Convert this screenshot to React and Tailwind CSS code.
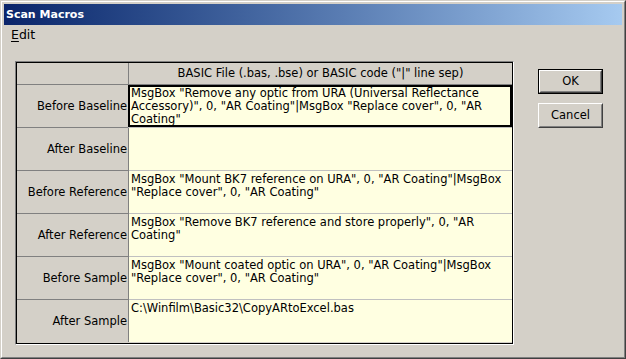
const rows = [
  {
    label: "Before Baseline",
    lines: [
      'MsgBox "Remove any optic from URA (Universal Reflectance',
      'Accessory)", 0, "AR Coating"|MsgBox "Replace cover", 0, "AR',
      'Coating"',
    ],
    selected: true,
  },
  { label: "After Baseline", lines: [] },
  {
    label: "Before Reference",
    lines: [
      'MsgBox "Mount BK7 reference on URA", 0, "AR Coating"|MsgBox',
      '"Replace cover", 0, "AR Coating"',
    ],
  },
  {
    label: "After Reference",
    lines: ['MsgBox "Remove BK7 reference and store properly", 0, "AR', 'Coating"'],
  },
  {
    label: "Before Sample",
    lines: [
      'MsgBox "Mount coated optic on URA", 0, "AR Coating"|MsgBox',
      '"Replace cover", 0, "AR Coating"',
    ],
  },
  { label: "After Sample", lines: ["C:\\Winfilm\\Basic32\\CopyARtoExcel.bas"] },
];

function Button({ label, isDefault }) {
  const inner = (
    <div className="h-full border border-t-white border-l-white border-b-[#404040] border-r-[#404040]">
      <div className="h-full flex items-center justify-center border border-t-[#d4d0c8] border-l-[#d4d0c8] border-b-[#808080] border-r-[#808080]">
        {label}
      </div>
    </div>
  );
  if (isDefault) {
    return <div className="w-[65px] h-[25px] border border-black">{inner}</div>;
  }
  return <div className="w-[65px] h-[25px]">{inner}</div>;
}

export default function App() {
  return (
    <div
      className="w-[626px] h-[359px] bg-[#d4d0c8] text-black text-[11.5px] leading-[13px] border border-t-[#d4d0c8] border-l-[#d4d0c8] border-b-[#404040] border-r-[#404040]"
      style={{ fontFamily: '"DejaVu Sans", Verdana, sans-serif' }}
    >
      <div className="h-full border border-t-white border-l-white border-b-[#808080] border-r-[#808080] p-[2px] flex flex-col">
        {/* title bar */}
        <div className="h-[21px] bg-gradient-to-r from-[#0a246a] to-[#a6caf0] flex items-center pl-[2px] text-white font-bold text-[11px]">
          Scan Macros
        </div>

        {/* menu */}
        <div className="h-[19px] flex items-center pl-[7px] text-[12.5px]">
          <span>
            <span className="underline underline-offset-2">E</span>dit
          </span>
        </div>

        <div className="flex items-start pl-[11px] pt-[17px]">
          {/* grid */}
          <div className="border border-t-[#808080] border-l-[#808080] border-b-white border-r-white">
            <div className="border border-black w-[497px]">
              <div className="flex h-[22px]">
                <div className="w-[112px] bg-[#d4d0c8] border-r border-b border-[#808080]" />
                <div className="w-[383px] bg-[#d4d0c8] border-b border-[#808080] flex items-center justify-center">
                  BASIC File (.bas, .bse) or BASIC code ("|" line sep)
                </div>
              </div>
              {rows.map((r, i) => {
                const last = i === rows.length - 1;
                return (
                  <div key={r.label} className="flex h-[43px]">
                    <div
                      className={`w-[112px] bg-[#d4d0c8] border-r border-[#808080] flex items-center justify-end pr-[1px] whitespace-nowrap ${
                        last ? "h-[42px]" : "border-b"
                      }`}
                    >
                      {r.label}
                    </div>
                    <div
                      className={`w-[383px] bg-[#ffffe1] pl-[2px] pt-[2px] whitespace-nowrap ${
                        last ? "h-[42px]" : "border-b border-[#c0c0c0]"
                      } ${r.selected ? "shadow-[inset_0_0_0_2px_#000] -ml-[1px] pl-[3px] w-[384px]" : ""}`}
                    >
                      {r.lines.map((l, j) => (
                        <div key={j}>{l}</div>
                      ))}
                    </div>
                  </div>
                );
              })}
            </div>
          </div>

          {/* buttons */}
          <div className="flex flex-col gap-[9px] ml-[24px] mt-[8px]">
            <Button label="OK" isDefault />
            <Button label="Cancel" />
          </div>
        </div>
      </div>
    </div>
  );
}
